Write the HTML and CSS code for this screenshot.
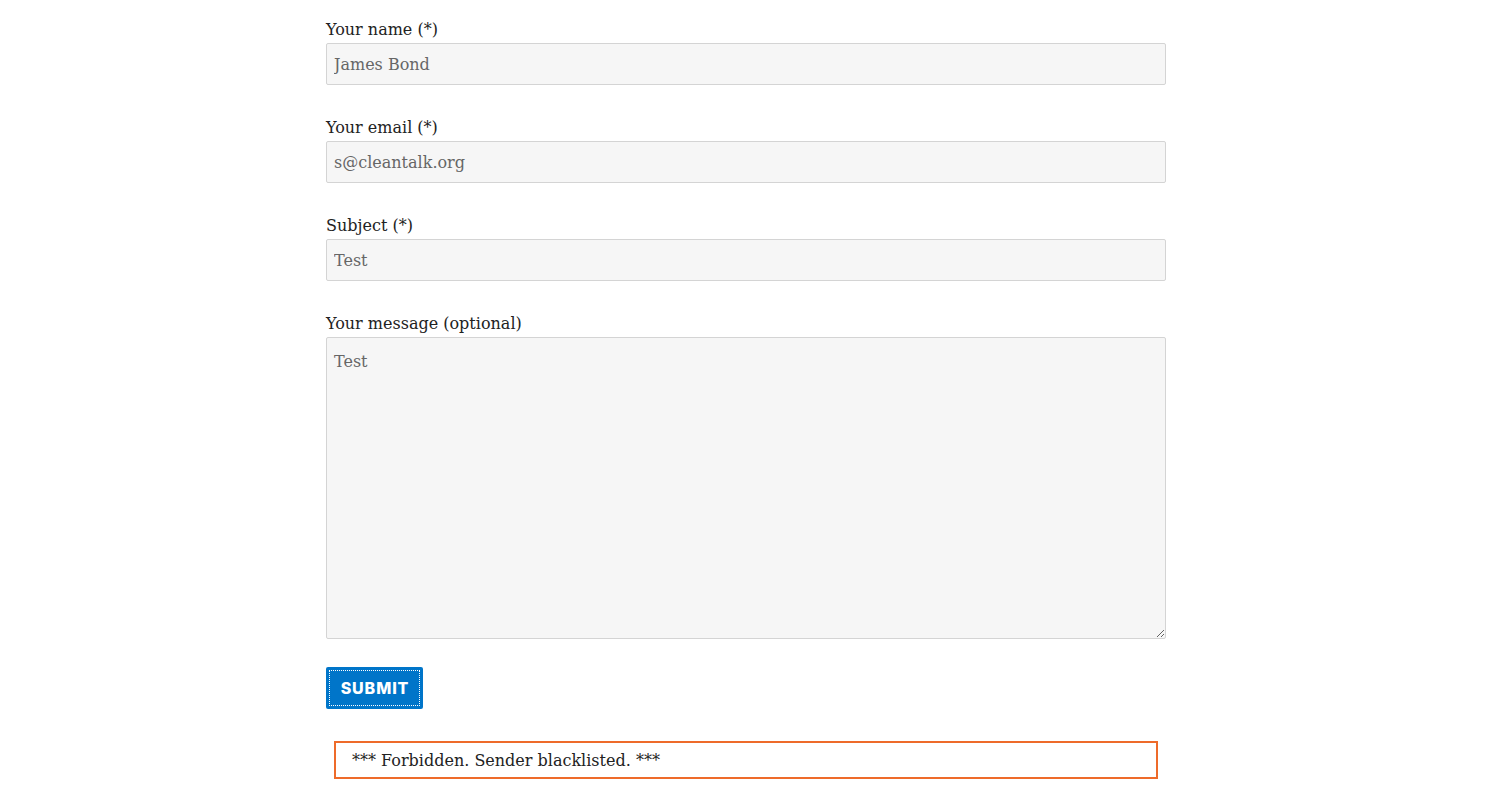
FILE: index.html
```html
<!DOCTYPE html>
<html>
<head>
<meta charset="utf-8">
<link rel="stylesheet" href="styles.css">
</head>
<body>
<form class="contact">
  <div class="field">
    <label class="label">Your name (*)</label>
    <input class="input" type="text" value="James Bond">
  </div>
  <div class="field">
    <label class="label">Your email (*)</label>
    <input class="input" type="text" value="s@cleantalk.org">
  </div>
  <div class="field">
    <label class="label">Subject (*)</label>
    <input class="input" type="text" value="Test">
  </div>
  <div class="field">
    <label class="label">Your message (optional)</label>
    <textarea class="input textarea">Test</textarea>
  </div>
  <div class="actions">
    <button class="submit" type="button"><span class="submit-inner">SUBMIT</span></button>
  </div>
  <div class="notice">*** Forbidden. Sender blacklisted. ***</div>
</form>
</body>
</html>
```
FILE: styles.css
```css
html, body {
  margin: 0;
  padding: 0;
  background: #ffffff;
}
body {
  font-family: "DejaVu Serif", "Liberation Serif", serif;
  color: #222222;
}
.contact {
  width: 840px;
  margin: 0 0 0 326px;
  padding-top: 19px;
  display: flex;
  flex-direction: column;
}
.field {
  display: flex;
  flex-direction: column;
  margin-bottom: 32px;
}
.label {
  font-size: 16px;
  line-height: 21px;
  height: 24px;
  color: #222;
}
.input {
  box-sizing: border-box;
  width: 840px;
  height: 42px;
  margin: 0;
  padding: 0 7px;
  border: 1px solid #d4d4d4;
  border-radius: 2px;
  background: #f6f6f6;
  color: #666666;
  font-family: "DejaVu Serif", "Liberation Serif", serif;
  font-size: 16px;
  outline: none;
}
.textarea {
  height: 302px;
  padding: 12px 7px;
  resize: vertical;
  line-height: 24px;
}
.field:nth-child(4) {
  margin-bottom: 28px;
}
.actions {
  display: flex;
  margin-bottom: 32px;
}
.submit {
  box-sizing: border-box;
  width: 97px;
  height: 42px;
  padding: 3px;
  margin: 0;
  border: none;
  border-radius: 2px;
  background: #0075c9;
  cursor: pointer;
}
.submit-inner {
  box-sizing: border-box;
  display: flex;
  align-items: center;
  justify-content: center;
  width: 100%;
  height: 100%;
  border: 1px dotted #ffffff;
  color: #ffffff;
  font-family: "Inter", "DejaVu Sans", sans-serif;
  font-weight: 800;
  font-size: 16px;
  letter-spacing: 0.9px;
  padding-left: 1px;
}
.notice {
  box-sizing: border-box;
  margin-left: 8px;
  width: 824px;
  height: 38px;
  border: 2px solid #ee6b2a;
  padding: 0 16px;
  display: flex;
  align-items: center;
  font-size: 16px;
  color: #222;
}
```
